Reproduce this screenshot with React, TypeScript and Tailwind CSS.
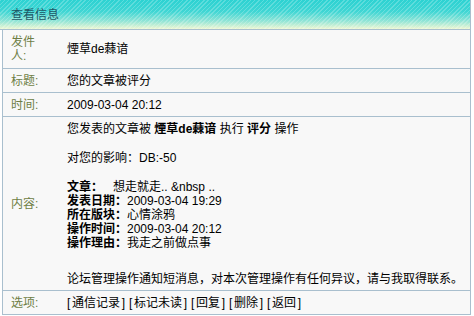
const FONT = { fontFamily: '"Liberation Sans", "Noto Sans CJK SC", sans-serif' };

function Row({ label, height, children }: { label: string; height: string; children: React.ReactNode }) {
  return (
    <div className={`ml-[2px] flex items-center border-b border-l border-[#a9bfce] bg-[#f8f8f8] ${height}`}>
      <div className="w-[58px] shrink-0 pl-[8px] pr-[20px] leading-[14px] text-[#6e7e45]">{label}</div>
      <div className="flex-1 pl-[6px] leading-[14px] text-black">{children}</div>
    </div>
  );
}

function Option({ text }: { text: string }) {
  return (
    <span className="inline-flex">
      <span className="inline-block w-[5px]">[</span>
      {text}
      <span className="inline-block w-[5px] text-right">]</span>
    </span>
  );
}

const options = ['通信记录', '标记未读', '回复', '删除', '返回'];

export default function App() {
  return (
    <div className="h-[316px] w-[474px] bg-white text-[12px]" style={FONT}>
      <div className="w-[471px] border-r border-[#a9bfce]">
        <div className="flex h-[30px] items-center border-b border-[#a9bfce] bg-[image:repeating-linear-gradient(135deg,rgba(255,255,255,0.22)_0px,rgba(255,255,255,0.22)_1px,transparent_1px,transparent_3px),linear-gradient(to_bottom,#2cd2d2_0%,#3fd6d4_40%,#8fe4d6_72%,#eef8d4_100%)] pl-[11px] text-[#1d5866]">
          查看信息
        </div>

        <Row label="发件人:" height="h-[39px]">煙草de蕀谙</Row>
        <Row label="标题:" height="h-[24px]">您的文章被评分</Row>
        <Row label="时间:" height="h-[24px]">2009-03-04 20:12</Row>

        <Row label="内容:" height="h-[174px]">
          <div className="flex flex-col">
            <div>
              您发表的文章被 <b>煙草de蕀谙</b> 执行 <b>评分</b> 操作
            </div>
            <div className="mt-[15px]">对您的影响：DB:-50</div>
            <div className="mt-[15px]">
              <b>文章：</b>
              <span className="ml-[10px]">想走就走.. &amp;nbsp ..</span>
            </div>
            <div>
              <b>发表日期：</b>2009-03-04 19:29
            </div>
            <div>
              <b>所在版块：</b>心情涂鸦
            </div>
            <div>
              <b>操作时间：</b>2009-03-04 20:12
            </div>
            <div>
              <b>操作理由：</b>我走之前做点事
            </div>
            <div className="mt-[22px] whitespace-nowrap">
              论坛管理操作通知短消息，对本次管理操作有任何异议，请与我取得联系。
            </div>
          </div>
        </Row>

        <Row label="选项:" height="h-[24px]">
          <div className="flex gap-[4px]">
            {options.map((o) => (
              <Option key={o} text={o} />
            ))}
          </div>
        </Row>
      </div>
    </div>
  );
}
